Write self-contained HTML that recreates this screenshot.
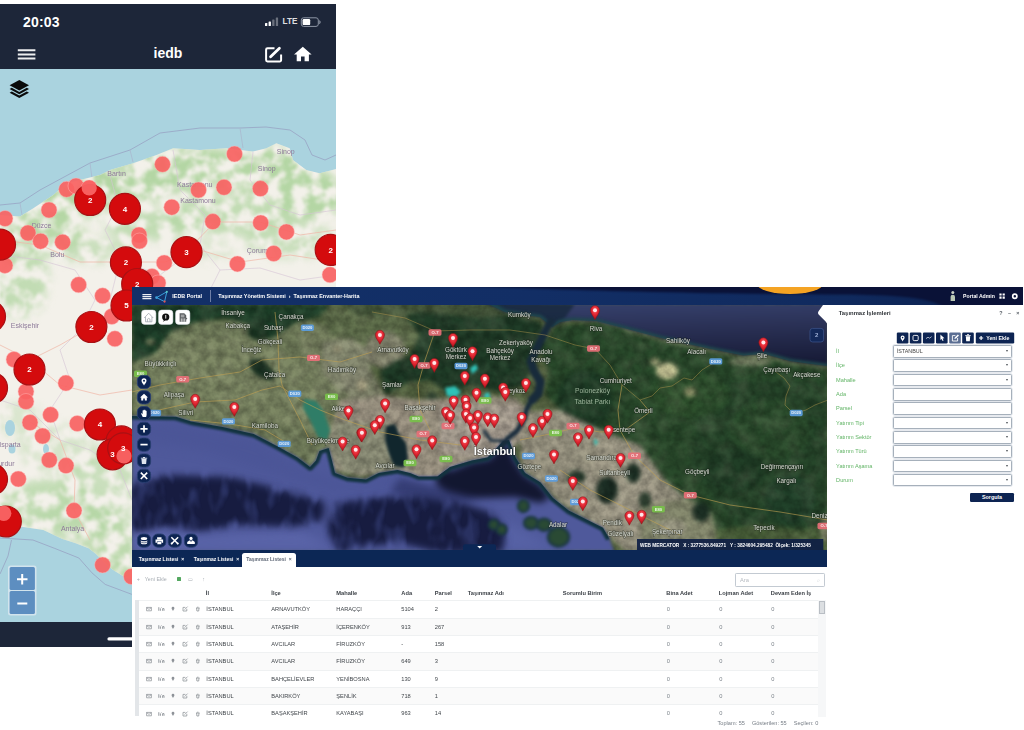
<!DOCTYPE html>
<html lang="tr"><head><meta charset="utf-8"><title>iedb</title>
<style>
html,body{margin:0;padding:0;background:#fff}
body{width:1024px;height:730px;position:relative;overflow:hidden;font-family:"Liberation Sans",sans-serif}
svg{display:block;overflow:hidden}
#mob,#desk{filter:blur(.55px)}

#mob{position:absolute;left:0;top:4px;width:335.5px;height:643px;overflow:hidden;background:#1d2639}
#mhead{position:absolute;left:0;top:0;width:336px;height:65px;background:#1d2639;color:#fff;font-weight:bold}
#mhead .time{position:absolute;left:23px;top:9.5px;font-size:14px;line-height:16px;letter-spacing:.2px}
#mhead .lte{position:absolute;left:282.5px;top:12.8px;font-size:8.2px;line-height:10px;opacity:.85}
#mhead .ttl{position:absolute;left:118px;width:100px;text-align:center;top:41px;font-size:14px;line-height:16px}
#msvg{position:absolute;left:0;top:0}
.ml{font-size:7px;text-anchor:middle;fill:#8d7a99;font-family:"Liberation Sans",sans-serif;filter:url(#b1)}
.cn{font-size:8px;font-weight:bold;fill:#fff;text-anchor:middle;font-family:"Liberation Sans",sans-serif}


#desk{position:absolute;left:132.3px;top:287px;width:890.7px;height:441px;background:#fff;overflow:hidden}
#dhead{position:absolute;left:0;top:0;z-index:2;width:100%;height:17.6px;background:linear-gradient(90deg,#133068 0%,#122e65 45%,#102a5e 80%,#0e2555 90%,#0b1a44 100%);color:#fff;font-weight:bold;font-size:5.4px;line-height:18.6px;overflow:hidden}
#dhead .sun{position:absolute;left:624.7px;top:-13px;width:66px;height:20px;border-radius:50%;background:#f4a323;filter:blur(.6px)}
#dhead svg{position:absolute;top:0}
#dhead .hbg{left:0}
#dhead .hb{left:7.7px}
#dhead .hr{left:812.7px}
#dhead .hr2{left:861.7px}
#dhead span{position:absolute;top:0;white-space:pre}
#dhead .h1{left:40px}
#dhead .sep{position:absolute;left:77.3px;top:2.8px;width:.8px;height:12px;background:#6f7fa6}
#dhead .h2{left:86px}
#dhead .h3{left:830.8px;font-size:5.15px}
#sat,#ovl{position:absolute;left:-.3px;top:17px}
#tabs{position:absolute;left:0;top:263.2px;width:694.8px;height:17px;background:#0c2755;color:#fff;font-size:5px;font-weight:bold}
#tabs .tb{position:absolute;top:3.2px;height:13.8px;line-height:12.6px;padding:0 0;white-space:nowrap}
#tabs .tb.act{background:#fff;color:#5d6675;border-radius:2.6px 2.6px 0 0;width:54.6px;text-align:center}
#tbl{position:absolute;left:0;top:280px;width:695px;height:161px;background:#fff;font-size:5.7px;color:#41464b}
#tbl .ttb{position:absolute;left:0;top:6.6px;height:10px;width:100px;color:#a7adb3;font-size:5.3px;line-height:10px}
#tbl .ttb span{position:absolute;top:0}
#tbl .ttb .gx{position:absolute;left:44.8px;top:3px;width:3.8px;height:4px;background:#54a860;border-radius:.6px}
#tbl .srch{position:absolute;left:603.2px;top:5.6px;width:87.4px;height:12px;border:.8px solid #c3cad2;border-radius:1.2px;color:#b5bac0;line-height:12px}
#tbl .srch span{position:absolute;left:3.6px}
#tbl .srch b{position:absolute;right:4px;font-weight:normal;color:#d3d7db}
#tbl .thr{position:absolute;left:0;top:20px;width:695px;height:13px;font-weight:bold;color:#3a3f45;line-height:13px}
#tbl .thr span,#tbl .tr span{position:absolute;white-space:nowrap}
#tbl .tr{position:absolute;left:5.6px;width:681px;height:16.6px;border-top:.75px solid #eff1f2;line-height:16.6px}
#tbl .tr span{margin-left:-5.6px}
#tbl .tr.alt{background:#fafafa}
#tbl .tr .ri{position:absolute;left:7.4px;top:4.2px;opacity:.8;filter:blur(.25px)}
#tbl .tr .z{color:#7d848b}
#tbl .lbar{position:absolute;left:3px;top:33.2px;width:3.3px;height:116px;background:#e3e6e9}
#tbl .sbar{position:absolute;left:686.2px;top:33px;width:7.4px;height:117px;background:#f6f7f8}
#tbl .sthumb{position:absolute;left:686.5px;top:33.8px;width:6.4px;height:13.6px;background:#dcdfe2;border:.6px solid #b9bec4;box-sizing:border-box}
#tbl .tft{position:absolute;right:9px;top:150.6px;color:#777e86;font-size:5.6px;line-height:10px;white-space:nowrap}
#tbl .tft span{margin-left:7px}
#pnl{position:absolute;left:695px;top:17.6px;width:196px;height:424px;background:#fff;font-size:5.4px}
#pnl .notch{position:absolute;left:-11.8px;top:0}
#pnl .pt{position:absolute;left:11.4px;top:4.8px;font-weight:bold;color:#2f3338;font-size:5.9px;line-height:9px}
#pnl .pc{position:absolute;left:169.5px;top:4.8px;color:#5a6068;font-weight:bold;line-height:9px}
#pnl .pc span{display:inline-block;width:8.4px;text-align:center}
#pnl .ptb{position:absolute;left:68.7px;top:27.4px}
#pnl .fl{position:absolute;left:8.8px;font-size:5.6px;color:#63b567;line-height:9px;white-space:nowrap}
#pnl .fi{position:absolute;left:65.4px;width:119.2px;height:12.6px;box-sizing:border-box;border:1px solid #a6b0bb;box-shadow:0 0 0 .7px #dfe4ea;border-radius:1.6px;background:#fff;color:#444;line-height:11px}
#pnl .fi span{position:absolute;left:3px}
#pnl .fi.sel:after{content:"";position:absolute;right:2.8px;top:4px;border:1.9px solid transparent;border-top:2.8px solid #4a4f56}
#pnl .sorg{position:absolute;left:142.6px;top:188.2px;width:44.2px;height:9.6px;background:#0d2452;color:#fff;font-weight:bold;text-align:center;line-height:9.6px;border-radius:1.2px}
.sl{font-size:6.3px;fill:#e6e8e0;opacity:.9;text-anchor:middle;font-family:"Liberation Sans",sans-serif;paint-order:stroke;stroke:#1c241c;stroke-width:1.1px;stroke-opacity:.65;filter:url(#sb05)}
.sl2{font-size:6.8px;fill:#a9bfa6;text-anchor:middle;font-family:"Liberation Sans",sans-serif;filter:url(#sb05);opacity:.9}
.sl3{font-size:11px;font-weight:bold;fill:#fff;text-anchor:middle;font-family:"Liberation Sans",sans-serif;paint-order:stroke;stroke:#222;stroke-width:1.2px;stroke-opacity:.6}
.sht{font-size:4.2px;fill:#fff;font-weight:bold;text-anchor:middle;font-family:"Liberation Sans",sans-serif;opacity:.85}
.bdg{font-size:6px;fill:#9fb0d6;font-weight:bold;text-anchor:middle;font-family:"Liberation Sans",sans-serif}
.stt{font-size:4.75px;fill:#fff;font-weight:bold;font-family:"Liberation Sans",sans-serif;white-space:pre}
.pbt{font-size:5.3px;fill:#fff;font-weight:bold;font-family:"Liberation Sans",sans-serif}

</style></head><body>
<div id="mob">
<div id="mhead"><span class="time">20:03</span><span class="lte">LTE</span><span class="ttl">iedb</span></div>
<svg id="msvg" width="336" height="643" viewBox="0 4 336 643">
<defs>
<filter id="b2" color-interpolation-filters="sRGB" x="-20%" y="-20%" width="140%" height="140%"><feGaussianBlur stdDeviation="2"/></filter>
<filter id="b4" color-interpolation-filters="sRGB" x="-20%" y="-20%" width="140%" height="140%"><feGaussianBlur stdDeviation="4"/></filter>
<filter id="b1" color-interpolation-filters="sRGB"><feGaussianBlur stdDeviation="0.6"/></filter>
<filter id="mott" color-interpolation-filters="sRGB" x="0" y="60" width="340" height="570" filterUnits="userSpaceOnUse"><feGaussianBlur in="SourceGraphic" stdDeviation="5" result="bl"/><feTurbulence type="fractalNoise" baseFrequency="0.075" numOctaves="3" seed="11" result="n"/><feColorMatrix in="n" type="matrix" values="0 0 0 0 0  0 0 0 0 0  0 0 0 0 0  3.2 0 0 0 -1.05" result="na"/><feComposite in="bl" in2="na" operator="in" result="m"/><feGaussianBlur in="m" stdDeviation="0.8"/></filter>
<clipPath id="mclip"><rect x="0" y="69" width="336" height="553"/></clipPath>
<clipPath id="landclip"><path d="M0,215 L20,216.6 L33.3,208.2 L53.3,195 L66.6,183.3 L100,175 L110,170 L133,163.3 L156.5,155 L173,148.3 L200,150 L226.4,148.3 L253,151.6 L266.4,148.3 L276.4,143.3 L289.7,148.3 L293,160 L306.4,170 L319.7,173.3 L336,169 L336,622 L170,622 L150,592 L131.4,579.4 L123,576 L115,571.2 L108,566 L102,560 L96,554 L88.7,548.2 L75,543 L62.4,539 L43.3,530 L20,526.6 L0,535 Z"/></clipPath>
</defs>
<g clip-path="url(#mclip)">
<rect x="0" y="69" width="336" height="553" fill="#aad3df"/>
<path d="M0,205 L20,203 L40,190 L90,163 L130,150 L160,133 L200,128 L240,128 L266,127 L290,130 L305,140 L312,155 L325,160 L336,155" fill="none" stroke="#9aa9c6" stroke-width="1" opacity=".9"/>
<path d="M20,203 L22,215 M90,163 L92,178 M130,150 L133,162 M240,128 L243,148" fill="none" stroke="#a9b9cf" stroke-width=".8"/>
<path d="M0,538 L32.9,540 L54.2,548.2 L78.9,558 L92,572.9 L105.2,584.4 L131.4,594.2 L150,600 M11.5,540 L8,556 L0,574" fill="none" stroke="#9aa9c6" stroke-width="1" opacity=".9"/>
<path d="M0,215 L20,216.6 L33.3,208.2 L53.3,195 L66.6,183.3 L100,175 L110,170 L133,163.3 L156.5,155 L173,148.3 L200,150 L226.4,148.3 L253,151.6 L266.4,148.3 L276.4,143.3 L289.7,148.3 L293,160 L306.4,170 L319.7,173.3 L336,169 L336,622 L170,622 L150,592 L131.4,579.4 L123,576 L115,571.2 L108,566 L102,560 L96,554 L88.7,548.2 L75,543 L62.4,539 L43.3,530 L20,526.6 L0,535 Z" fill="#f3f1ea"/>
<g clip-path="url(#landclip)">
<g filter="url(#mott)">
<ellipse cx="60" cy="205" rx="51.75" ry="18.2" fill="#b4d6a4" opacity="1"/>
<ellipse cx="120" cy="185" rx="57.5" ry="20.8" fill="#b4d6a4" opacity="1"/>
<ellipse cx="190" cy="170" rx="69" ry="23.4" fill="#b4d6a4" opacity="1"/>
<ellipse cx="260" cy="170" rx="57.5" ry="23.4" fill="#b4d6a4" opacity="1"/>
<ellipse cx="310" cy="195" rx="34.5" ry="26" fill="#b4d6a4" opacity="1"/>
<ellipse cx="230" cy="215" rx="69" ry="20.8" fill="#b4d6a4" opacity="0.78"/>
<ellipse cx="150" cy="225" rx="46" ry="15.6" fill="#b4d6a4" opacity="0.78"/>
<ellipse cx="40" cy="235" rx="46" ry="18.2" fill="#b4d6a4" opacity="0.91"/>
<ellipse cx="90" cy="250" rx="46" ry="13" fill="#b4d6a4" opacity="0.65"/>
<ellipse cx="20" cy="280" rx="28.75" ry="39" fill="#b4d6a4" opacity="0.78"/>
<ellipse cx="290" cy="240" rx="46" ry="18.2" fill="#b4d6a4" opacity="0.65"/>
<ellipse cx="200" cy="250" rx="34.5" ry="10.4" fill="#b4d6a4" opacity="0.455"/>
<ellipse cx="60" cy="450" rx="40.25" ry="26" fill="#b4d6a4" opacity="0.455"/>
<ellipse cx="100" cy="485" rx="40.25" ry="32.5" fill="#b4d6a4" opacity="0.65"/>
<ellipse cx="50" cy="505" rx="51.75" ry="26" fill="#b4d6a4" opacity="0.78"/>
<ellipse cx="110" cy="545" rx="32.2" ry="36.4" fill="#b4d6a4" opacity="0.845"/>
<ellipse cx="120" cy="590" rx="28.75" ry="32.5" fill="#b4d6a4" opacity="0.65"/>
<ellipse cx="20" cy="420" rx="23" ry="19.5" fill="#b4d6a4" opacity="0.39"/>
<ellipse cx="75" cy="522" rx="43.7" ry="20.8" fill="#b4d6a4" opacity="0.65"/>
</g>
<g fill="none" stroke="#d6c4d6" stroke-width=".8" opacity=".75"><path d="M110,175 L118,205 L105,230 L120,260 L110,300"/><path d="M173,150 L180,190 L205,215 L200,245 L220,270 L210,290"/><path d="M253,152 L250,180 L270,205 L300,215 L336,210"/><path d="M0,255 L40,260 L75,270 L95,300 L80,330 L60,350 L70,380 L50,410 L60,440"/><path d="M120,260 L160,275 L200,245"/><path d="M220,270 L260,268 L300,280 L336,275"/><path d="M0,400 L30,410 L60,440 L90,450 L120,470 L132,500"/></g>
<g fill="none" stroke="#f0b8a8" stroke-width=".8" opacity=".9"><path d="M0,240 L40,245 L80,262 L125,262 L165,262 L200,250 L240,262 L290,255 L336,262"/><path d="M0,345 L30,360 L60,385 L100,395 L132,390"/><path d="M125,262 L120,300 L95,325 L60,345 L30,360"/><path d="M30,422 L60,440 L75,480 L74,510 L90,540"/><path d="M186,252 L215,222 L260,222 L300,235 L336,230"/></g>
<ellipse cx="10" cy="428" rx="5" ry="8" fill="#aad3df"/><ellipse cx="12" cy="449" rx="3.5" ry="4.5" fill="#aad3df"/><ellipse cx="46" cy="449" rx="3" ry="5" fill="#aad3df"/>
</g>
<text x="116.6" y="175.7" class="ml">Bartın</text>
<text x="194.8" y="187.2" class="ml">Kastamonu</text>
<text x="198" y="203" class="ml">Kastamonu</text>
<text x="285.8" y="154.4" class="ml">Sinop</text>
<text x="266.7" y="170.8" class="ml">Sinop</text>
<text x="41.6" y="228.4" class="ml">Düzce</text>
<text x="57.3" y="257.4" class="ml">Bolu</text>
<text x="257.3" y="252.9" class="ml">Çorum</text>
<text x="25" y="328.4" class="ml">Eskişehir</text>
<text x="72.6" y="530.7" class="ml">Antalya</text>
<text x="4" y="465.9" class="ml">Burdur</text>
<text x="10" y="447.4" class="ml">Isparta</text>
<circle cx="234.5" cy="154" r="8" fill="#f96262" opacity=".92" stroke="#fbb" stroke-width=".8" stroke-opacity=".6"/>
<circle cx="162.5" cy="164.3" r="8" fill="#f96262" opacity=".92" stroke="#fbb" stroke-width=".8" stroke-opacity=".6"/>
<circle cx="198.5" cy="190" r="8" fill="#f96262" opacity=".92" stroke="#fbb" stroke-width=".8" stroke-opacity=".6"/>
<circle cx="224" cy="187.3" r="8" fill="#f96262" opacity=".92" stroke="#fbb" stroke-width=".8" stroke-opacity=".6"/>
<circle cx="260.4" cy="188.6" r="8" fill="#f96262" opacity=".92" stroke="#fbb" stroke-width=".8" stroke-opacity=".6"/>
<circle cx="171.8" cy="207.2" r="8" fill="#f96262" opacity=".92" stroke="#fbb" stroke-width=".8" stroke-opacity=".6"/>
<circle cx="212.8" cy="221.6" r="8" fill="#f96262" opacity=".92" stroke="#fbb" stroke-width=".8" stroke-opacity=".6"/>
<circle cx="260.7" cy="222.9" r="8" fill="#f96262" opacity=".92" stroke="#fbb" stroke-width=".8" stroke-opacity=".6"/>
<circle cx="286.4" cy="231.9" r="8" fill="#f96262" opacity=".92" stroke="#fbb" stroke-width=".8" stroke-opacity=".6"/>
<circle cx="273.7" cy="253.5" r="8" fill="#f96262" opacity=".92" stroke="#fbb" stroke-width=".8" stroke-opacity=".6"/>
<circle cx="237.4" cy="263.9" r="8" fill="#f96262" opacity=".92" stroke="#fbb" stroke-width=".8" stroke-opacity=".6"/>
<circle cx="330" cy="274.8" r="8" fill="#f96262" opacity=".92" stroke="#fbb" stroke-width=".8" stroke-opacity=".6"/>
<circle cx="164.2" cy="262.9" r="8" fill="#f96262" opacity=".92" stroke="#fbb" stroke-width=".8" stroke-opacity=".6"/>
<circle cx="139" cy="235" r="8" fill="#f96262" opacity=".92" stroke="#fbb" stroke-width=".8" stroke-opacity=".6"/>
<circle cx="139.5" cy="241" r="8" fill="#f96262" opacity=".92" stroke="#fbb" stroke-width=".8" stroke-opacity=".6"/>
<circle cx="66.6" cy="189.3" r="8" fill="#f96262" opacity=".92" stroke="#fbb" stroke-width=".8" stroke-opacity=".6"/>
<circle cx="76" cy="186" r="8" fill="#f96262" opacity=".92" stroke="#fbb" stroke-width=".8" stroke-opacity=".6"/>
<circle cx="89.2" cy="188" r="8" fill="#f96262" opacity=".92" stroke="#fbb" stroke-width=".8" stroke-opacity=".6"/>
<circle cx="49" cy="210" r="8" fill="#f96262" opacity=".92" stroke="#fbb" stroke-width=".8" stroke-opacity=".6"/>
<circle cx="5" cy="218.5" r="8" fill="#f96262" opacity=".92" stroke="#fbb" stroke-width=".8" stroke-opacity=".6"/>
<circle cx="28" cy="233" r="8" fill="#f96262" opacity=".92" stroke="#fbb" stroke-width=".8" stroke-opacity=".6"/>
<circle cx="40.6" cy="241.2" r="8" fill="#f96262" opacity=".92" stroke="#fbb" stroke-width=".8" stroke-opacity=".6"/>
<circle cx="62.6" cy="242.2" r="8" fill="#f96262" opacity=".92" stroke="#fbb" stroke-width=".8" stroke-opacity=".6"/>
<circle cx="5" cy="265.4" r="8" fill="#f96262" opacity=".92" stroke="#fbb" stroke-width=".8" stroke-opacity=".6"/>
<circle cx="78.6" cy="284.8" r="8" fill="#f96262" opacity=".92" stroke="#fbb" stroke-width=".8" stroke-opacity=".6"/>
<circle cx="102.6" cy="295.8" r="8" fill="#f96262" opacity=".92" stroke="#fbb" stroke-width=".8" stroke-opacity=".6"/>
<circle cx="111.8" cy="316.5" r="8" fill="#f96262" opacity=".92" stroke="#fbb" stroke-width=".8" stroke-opacity=".6"/>
<circle cx="114.9" cy="338.8" r="8" fill="#f96262" opacity=".92" stroke="#fbb" stroke-width=".8" stroke-opacity=".6"/>
<circle cx="152" cy="276.5" r="8" fill="#f96262" opacity=".92" stroke="#fbb" stroke-width=".8" stroke-opacity=".6"/>
<circle cx="158" cy="283" r="8" fill="#f96262" opacity=".92" stroke="#fbb" stroke-width=".8" stroke-opacity=".6"/>
<circle cx="14" cy="359.5" r="8" fill="#f96262" opacity=".92" stroke="#fbb" stroke-width=".8" stroke-opacity=".6"/>
<circle cx="65.9" cy="383.1" r="8" fill="#f96262" opacity=".92" stroke="#fbb" stroke-width=".8" stroke-opacity=".6"/>
<circle cx="26" cy="391.5" r="8" fill="#f96262" opacity=".92" stroke="#fbb" stroke-width=".8" stroke-opacity=".6"/>
<circle cx="26" cy="401.5" r="8" fill="#f96262" opacity=".92" stroke="#fbb" stroke-width=".8" stroke-opacity=".6"/>
<circle cx="50.6" cy="414.8" r="8" fill="#f96262" opacity=".92" stroke="#fbb" stroke-width=".8" stroke-opacity=".6"/>
<circle cx="30" cy="422.5" r="8" fill="#f96262" opacity=".92" stroke="#fbb" stroke-width=".8" stroke-opacity=".6"/>
<circle cx="77.3" cy="423.5" r="8" fill="#f96262" opacity=".92" stroke="#fbb" stroke-width=".8" stroke-opacity=".6"/>
<circle cx="42.6" cy="436" r="8" fill="#f96262" opacity=".92" stroke="#fbb" stroke-width=".8" stroke-opacity=".6"/>
<circle cx="49.3" cy="460" r="8" fill="#f96262" opacity=".92" stroke="#fbb" stroke-width=".8" stroke-opacity=".6"/>
<circle cx="66" cy="465.6" r="8" fill="#f96262" opacity=".92" stroke="#fbb" stroke-width=".8" stroke-opacity=".6"/>
<circle cx="18.3" cy="479" r="8" fill="#f96262" opacity=".92" stroke="#fbb" stroke-width=".8" stroke-opacity=".6"/>
<circle cx="74" cy="510.6" r="8" fill="#f96262" opacity=".92" stroke="#fbb" stroke-width=".8" stroke-opacity=".6"/>
<circle cx="102.6" cy="565" r="8" fill="#f96262" opacity=".92" stroke="#fbb" stroke-width=".8" stroke-opacity=".6"/>
<circle cx="131.5" cy="576.5" r="8" fill="#f96262" opacity=".92" stroke="#fbb" stroke-width=".8" stroke-opacity=".6"/>
<circle cx="124" cy="456" r="8" fill="#f96262" opacity=".92" stroke="#fbb" stroke-width=".8" stroke-opacity=".6"/>
<circle cx="90.2" cy="200" r="15.5" fill="#d40b0d" stroke="#a91114" stroke-width="1.2"/>
<circle cx="124.9" cy="208.8" r="15.5" fill="#d40b0d" stroke="#a91114" stroke-width="1.2"/>
<circle cx="186.5" cy="252.2" r="15.5" fill="#d40b0d" stroke="#a91114" stroke-width="1.2"/>
<circle cx="125.9" cy="262.4" r="15.5" fill="#d40b0d" stroke="#a91114" stroke-width="1.2"/>
<circle cx="137.2" cy="284" r="15.5" fill="#d40b0d" stroke="#a91114" stroke-width="1.2"/>
<circle cx="126.5" cy="305.5" r="15.5" fill="#d40b0d" stroke="#a91114" stroke-width="1.2"/>
<circle cx="91.4" cy="327" r="15.5" fill="#d40b0d" stroke="#a91114" stroke-width="1.2"/>
<circle cx="0" cy="244.6" r="15.5" fill="#d40b0d" stroke="#a91114" stroke-width="1.2"/>
<circle cx="330.7" cy="249.9" r="15.5" fill="#d40b0d" stroke="#a91114" stroke-width="1.2"/>
<circle cx="-10" cy="316.5" r="15.5" fill="#d40b0d" stroke="#a91114" stroke-width="1.2"/>
<circle cx="29.5" cy="369.5" r="15.5" fill="#d40b0d" stroke="#a91114" stroke-width="1.2"/>
<circle cx="-8" cy="388" r="15.5" fill="#d40b0d" stroke="#a91114" stroke-width="1.2"/>
<circle cx="99.9" cy="424.5" r="15.5" fill="#d40b0d" stroke="#a91114" stroke-width="1.2"/>
<circle cx="121.5" cy="441.4" r="15.5" fill="#d40b0d" stroke="#a91114" stroke-width="1.2"/>
<circle cx="112.6" cy="454.3" r="15.5" fill="#d40b0d" stroke="#a91114" stroke-width="1.2"/>
<circle cx="123.2" cy="448.3" r="15.5" fill="#d40b0d" stroke="#a91114" stroke-width="1.2"/>
<circle cx="-8" cy="479.3" r="15.5" fill="#d40b0d" stroke="#a91114" stroke-width="1.2"/>
<circle cx="5.8" cy="521.5" r="15.5" fill="#d40b0d" stroke="#a91114" stroke-width="1.2"/>
<circle cx="89.2" cy="188" r="7.6" fill="#f96464" opacity=".95"/>
<circle cx="124" cy="456" r="7.6" fill="#f96464" opacity=".95"/>
<circle cx="3.8" cy="513.3" r="7.6" fill="#f96464" opacity=".95"/>
<text x="90.2" y="202.8" class="cn">2</text>
<text x="124.9" y="211.6" class="cn">4</text>
<text x="186.5" y="255" class="cn">3</text>
<text x="125.9" y="265.2" class="cn">2</text>
<text x="137.2" y="286.8" class="cn">2</text>
<text x="126.5" y="308.3" class="cn">5</text>
<text x="91.4" y="329.8" class="cn">2</text>
<text x="330.7" y="252.7" class="cn">2</text>
<text x="29.5" y="372.3" class="cn">2</text>
<text x="99.9" y="427.3" class="cn">4</text>
<text x="112.6" y="457.1" class="cn">3</text>
<text x="123.2" y="451.1" class="cn">3</text>
<g fill="#0b0b0b"><path d="M19.3,80 L29,85.3 L19.3,90.6 L9.6,85.3 Z"/><path d="M9.6,89 L11.8,87.8 L19.3,91.9 L26.8,87.8 L29,89 L19.3,94.3 Z"/><path d="M9.6,92.7 L11.8,91.5 L19.3,95.6 L26.8,91.5 L29,92.7 L19.3,98 Z"/></g>
<rect x="8" y="565.5" width="28.5" height="50" rx="2.5" fill="#dfe9f2" opacity=".75"/><rect x="9.6" y="567" width="25.3" height="23" rx="1.5" fill="#5d8ec0"/><rect x="9.6" y="591" width="25.3" height="23" rx="1.5" fill="#5d8ec0"/><path d="M17,579.2 h10.5 M22.2,574 v10.5 M17.3,603.5 h10" stroke="#fff" stroke-width="2" fill="none"/>
</g>
<rect x="0" y="622" width="336" height="25" fill="#1d2639"/>
<rect x="107.4" y="637.3" width="122" height="3.3" rx="1.65" fill="#fff"/>
<g fill="none" stroke="#fff"><path d="M17.8,50.2 h17.6 M17.8,54.4 h17.6 M17.8,58.5 h17.6" stroke-width="2" opacity=".92"/></g>
<g fill="none" stroke="#fff" stroke-linejoin="round"><path d="M274.5,48.3 h-7 a1.4,1.4 0 0 0 -1.4,1.4 v10.4 a1.4,1.4 0 0 0 1.4,1.4 h12.2 a1.4,1.4 0 0 0 1.4,-1.4 v-5.6" stroke-width="2"/><path d="M270.6,56.8 L279.4,48.2" stroke-width="2.8" stroke-linecap="round"/></g>
<path d="M302.8,46.8 L294,54.6 h2.7 v6.6 h4.3 v-4.6 h3.6 v4.6 h4.3 v-6.6 h2.7 Z" fill="#fff"/>
<g fill="#fff"><rect x="265" y="23" width="2.3" height="3" rx=".5"/><rect x="268.6" y="21.5" width="2.3" height="4.5" rx=".5"/><rect x="272.2" y="19.5" width="2.3" height="6.5" rx=".5" opacity=".35"/><rect x="275.8" y="17.5" width="2.3" height="8.5" rx=".5" opacity=".35"/></g>
<rect x="301.3" y="17.8" width="17" height="8.6" rx="2.3" fill="none" stroke="#8e96a5" stroke-width="1"/><rect x="302.6" y="19.1" width="7.6" height="6" rx="1.2" fill="#fff"/><path d="M319.3,20.6 q1.6,1.5 0,3" stroke="#8e96a5" stroke-width="1.2" fill="none"/>
</svg>
</div>
<div id="desk">
<div id="dhead"><svg class="hbg" width="891" height="18" viewBox="0 0 891 18"><defs><filter id="hbl" color-interpolation-filters="sRGB" x="-5%" y="-50%" width="110%" height="200%"><feGaussianBlur stdDeviation="1.2"/></filter></defs><path d="M300,-2 L895,-2 L895,20 L812,20 C795,9.5 760,7.6 700,7.4 L620,6.8 C540,6 440,3 300,-2 Z" fill="#0a1237" filter="url(#hbl)"/></svg><div class="sun"></div><svg class="hb" width="34" height="18" viewBox="140 287 34 18"><path d="M142.4,294.6 h9 M142.4,296.6 h9 M142.4,298.6 h9" stroke="#fff" stroke-width="1.25" opacity=".92"/><path d="M156.5,297.6 L166.8,291.8 L164.6,301.6 Z" fill="none" stroke="#3aa0dc" stroke-width="1"/><circle cx="156.5" cy="297.6" r="1.3" fill="#3aa0dc"/><circle cx="166.8" cy="291.8" r="1.1" fill="#57c7c2"/><circle cx="164.6" cy="301.6" r="1.1" fill="#e8554e"/></svg><span class="h1">IEDB Portal</span><i class="sep"></i><span class="h2">Taşınmaz Yönetim Sistemi  ›  Taşınmaz Envanter-Harita</span><span class="h3">Portal Admin</span><svg class="hr" width="50" height="18" viewBox="945 287 50 18"><circle cx="952.8" cy="292.6" r="1.5" fill="#c9cfc4"/><path d="M950.6,301 v-4.2 q0,-2 2.2,-2 q2.2,0 2.2,2 v4.2 Z" fill="#b9c7b4"/></svg><svg class="hr2" width="30" height="18" viewBox="994 287 30 18"><path d="M999.4,293.4 h2.2 v2.2 h-2.2 Z M1002.6,293.4 h2.2 v2.2 h-2.2 Z M999.4,296.6 h2.2 v2.2 h-2.2 Z M1002.6,296.6 h2.2 v2.2 h-2.2 Z" fill="#fff"/><circle cx="1014.8" cy="296.2" r="2.1" fill="none" stroke="#fff" stroke-width="1.7"/></svg></div>
<svg id="sat" width="696" height="246.2" viewBox="132 304 696 246.2">
<defs>
<filter id="sb2" color-interpolation-filters="sRGB" x="-10%" y="-10%" width="120%" height="120%"><feGaussianBlur stdDeviation="2"/></filter>
<filter id="sb3" color-interpolation-filters="sRGB" x="-10%" y="-10%" width="120%" height="120%"><feGaussianBlur stdDeviation="3"/></filter>
<filter id="sb1" color-interpolation-filters="sRGB" x="-10%" y="-10%" width="120%" height="120%"><feGaussianBlur stdDeviation="1"/></filter>
<filter id="sb15" color-interpolation-filters="sRGB" x="-10%" y="-10%" width="120%" height="120%"><feGaussianBlur stdDeviation="1.5"/></filter>
<filter id="sb6" color-interpolation-filters="sRGB" x="-20%" y="-20%" width="140%" height="140%"><feGaussianBlur stdDeviation="6"/></filter>
<filter id="sb03" color-interpolation-filters="sRGB"><feGaussianBlur stdDeviation="0.35"/></filter>
<filter id="sb05" color-interpolation-filters="sRGB"><feGaussianBlur stdDeviation="0.55"/></filter>
<filter id="noise" color-interpolation-filters="sRGB" x="0" y="0" width="100%" height="100%"><feTurbulence type="fractalNoise" baseFrequency="0.12" numOctaves="3" seed="7"/><feColorMatrix type="matrix" values="0 0 0 0 0  0 0 0 0 0  0 0 0 0 0  0.9 0 0 0 -0.25"/></filter>
<filter id="noise2" color-interpolation-filters="sRGB" x="0" y="0" width="100%" height="100%"><feTurbulence type="fractalNoise" baseFrequency="0.06" numOctaves="2" seed="3"/><feColorMatrix type="matrix" values="0 0 0 0 1  0 0 0 0 1  0 0 0 0 0.85  1.1 0 0 0 -0.45"/></filter>
<linearGradient id="bsg" x1="0" y1="0" x2="0.12" y2="1"><stop offset="0" stop-color="#36416d"/><stop offset=".4" stop-color="#2b3257"/><stop offset="1" stop-color="#181c38"/></linearGradient>
<clipPath id="marc"><path d="M132,416 L160,416.5 L176,416.8 L191,421.5 L222.5,427 L253.7,434 L278.7,447 L297.5,457.5 L310,467 L316,460.6 L319.4,451 L328.7,448 L332,460.6 L335,473 L347.5,477.8 L366,479.4 L378.7,473 L397.5,470 L410,473 L418.7,476.5 L437.5,476.5 L450,467 L472,460.6 L487.5,457.5 L496,449 L503,441 L509,440 L515.6,457.5 L525,473 L540.6,482.5 L553,498 L568.7,510.6 L587.5,520 L603,527.8 L609.4,538.7 L614,551 L132,551 Z"/></clipPath>
<clipPath id="bsc"><path d="M488,304 L505,312 L525,315 L540,317 L552,327 L560,322 L572.5,320 L596.5,321 L623.8,328 L661.4,338 L709,348.6 L743.4,355.4 L764,353.7 L790,361 L811.8,364 L828,366 L828,304 Z"/></clipPath>
<filter id="sb4" color-interpolation-filters="sRGB" x="-20%" y="-20%" width="140%" height="140%"><feGaussianBlur stdDeviation="3.5"/></filter>
<filter id="trn" color-interpolation-filters="sRGB" filterUnits="userSpaceOnUse" x="132" y="460" width="400" height="95"><feGaussianBlur in="SourceGraphic" stdDeviation="4" result="bl"/><feTurbulence type="fractalNoise" baseFrequency="0.075 0.04" numOctaves="2" seed="4" result="n"/><feColorMatrix in="n" type="matrix" values="0 0 0 0 0.09  0 0 0 0 0.11  0 0 0 0 0.25  3.4 0 0 0 -0.85" result="na"/><feComposite in="na" in2="bl" operator="in"/></filter>
<clipPath id="landc"><path d="M132,304 H828 V551 H132 Z"/></clipPath>
<radialGradient id="pg" cx=".5" cy=".32" r=".65"><stop offset="0" stop-color="#ff5a63"/><stop offset=".55" stop-color="#df2430"/><stop offset="1" stop-color="#a8131b"/></radialGradient>
<g id="pin"><path d="M0,7 C-1.3,3.8 -4.6,0.7 -4.6,-2.4 A4.6,4.6 0 0 1 4.6,-2.4 C4.6,0.7 1.3,3.8 0,7 Z" fill="url(#pg)" stroke="#8e1418" stroke-width=".5"/><circle cx="0" cy="-2.4" r="2" fill="#ffeef0" opacity=".96"/></g>
</defs>
<rect x="132" y="304" width="696" height="247" fill="#53633f"/>
<g filter="url(#sb2)">
<path d="M132,330 L200,322 L300,318 L350,330 L372,360 L360,420 L335,470 L300,462 L250,434 L190,420 L132,415 Z" fill="#737f5c"/>
<path d="M150,345 L190,335 L250,340 L330,372 L320,430 L200,415 L150,405 Z" fill="#7f8965" opacity=".85"/>
<path d="M300,330 L345,335 L370,365 L350,400 L320,395 L305,360 Z" fill="#7b8463" opacity=".8"/>
<path d="M132,304 L330,304 L322,316 L296,322 L272,338 L256,340 L248,324 L225,318 L195,322 L170,332 L156,352 L132,362 Z" fill="#1d4029"/>
<path d="M132,304 L195,304 L192,322 L160,334 L150,356 L132,360 Z" fill="#193c26"/>
<ellipse cx="258" cy="331" rx="11" ry="9" fill="#193421"/>
<path d="M250,359 L263,360 L276,374 L271,381 L257,376 L250,368 Z" fill="#172f20"/>
<path d="M320,312 L420,306 L440,330 L400,350 L370,345 L330,335 Z" fill="#60704c"/>
<path d="M322,342 L352,338 L372,352 L368,384 L340,392 L322,372 Z" fill="#8f907a" opacity=".75"/>
<ellipse cx="385" cy="350" rx="20" ry="18" fill="#8e8c78" opacity=".85"/>
<path d="M405,315 L440,308 L500,310 L540,322 L548,340 L535,360 L525,385 L500,392 L470,385 L450,395 L430,380 L410,382 L385,395 L380,370 L410,355 L420,335 Z" fill="#1f3c27"/>
<ellipse cx="400" cy="372" rx="14" ry="12" fill="#1e3a26"/>
<ellipse cx="432" cy="404" rx="7" ry="12" fill="#243e2a"/>
<path d="M340,304 L500,304 L520,314 L480,318 L420,312 L360,316 Z" fill="#45583b"/>
<path d="M556,326 L600,322 L660,338 L710,350 L760,357 L828,366 L828,551 L700,551 L690,520 L655,490 L640,455 L600,440 L565,415 L545,395 L548,370 L540,350 Z" fill="#294a2b"/>
<path d="M700,380 L828,380 L828,530 L740,530 L690,470 Z" fill="#26462a"/>
<ellipse cx="585" cy="400" rx="28" ry="30" fill="#1e3d26"/>
<ellipse cx="790" cy="500" rx="25" ry="25" fill="#21422a"/>
<ellipse cx="690" cy="395" rx="40" ry="22" fill="#2f522e" opacity=".8"/>
<ellipse cx="770" cy="430" rx="40" ry="30" fill="#2c4d2d" opacity=".8"/><ellipse cx="735" cy="470" rx="30" ry="22" fill="#1f3c25" opacity=".8"/>
<path d="M340,400 L380,395 L420,400 L450,398 L480,396 L515,398 L530,410 L522,440 L505,455 L470,462 L440,478 L420,482 L395,470 L360,476 L334,470 L328,440 Z" fill="#a09786"/>
<path d="M440,405 L520,405 L515,445 L470,458 L440,450 Z" fill="#ada396"/>
<path d="M335,420 L395,425 L400,468 L345,474 L330,450 Z" fill="#8f917a"/>
<path d="M340,372 L370,368 L385,395 L350,402 Z" fill="#8a8b74" opacity=".8"/>
<path d="M528,412 L560,410 L600,430 L640,445 L665,480 L700,510 L720,540 L700,551 L625,551 L600,528 L560,502 L540,482 L522,468 L520,440 Z" fill="#9d9885"/>
<path d="M600,440 L640,450 L660,500 L640,540 L600,520 L585,480 Z" fill="#a59f8c"/>
<path d="M640,505 L690,498 L712,512 L722,551 L640,551 Z" fill="#858a6c" opacity=".85"/>
<path d="M715,530 L760,524 L800,530 L828,524 L828,551 L715,551 Z" fill="#55683f" opacity=".7"/>
<ellipse cx="826" cy="528" rx="6" ry="14" fill="#8d8f74" opacity=".8"/>
<ellipse cx="607" cy="490" rx="11" ry="13.5" fill="#1c2f25"/>
<ellipse cx="633" cy="473" rx="7.5" ry="10" fill="#1d3125"/>
<ellipse cx="701" cy="512" rx="9" ry="10" fill="#1e3226"/>
<ellipse cx="576" cy="477" rx="9.5" ry="6.5" fill="#23382a"/>
<ellipse cx="645" cy="500" rx="6" ry="8" fill="#243829"/>
<ellipse cx="667" cy="371" rx="11" ry="8.5" fill="#d0cb9c" opacity=".95"/><ellipse cx="690" cy="392" rx="6" ry="5" fill="#b3ae82" opacity=".75"/><ellipse cx="655" cy="362" rx="5" ry="4" fill="#bcb88c" opacity=".8"/>
<ellipse cx="362" cy="385" rx="5" ry="6" fill="#b5ad8c" opacity=".8"/><ellipse cx="150" cy="342" rx="5" ry="3" fill="#a9a77f" opacity=".7"/><ellipse cx="337" cy="349" rx="4" ry="3" fill="#b3ab88" opacity=".7"/>
<ellipse cx="672" cy="528" rx="14" ry="9" fill="#b4ae9a" opacity=".7"/>
<path d="M623.8,330 L661.4,340 L709,350.6 L743.4,357.4 L764,355.7 L790,363 L811.8,366 L828,368" fill="none" stroke="#8d9272" stroke-width="2.2" opacity=".8"/>
<ellipse cx="750" cy="362" rx="22" ry="4" fill="#8f9477" opacity=".8"/>
</g>
<rect x="132" y="304" width="696" height="247" filter="url(#noise)" opacity=".55"/>
<rect x="132" y="304" width="696" height="247" filter="url(#noise2)" opacity=".22"/>
<g filter="url(#sb15)">
<path d="M488,304 L505,312 L525,315 L540,317 L552,327 L560,322 L572.5,320 L596.5,321 L623.8,328 L661.4,338 L709,348.6 L743.4,355.4 L764,353.7 L790,361 L811.8,364 L828,366 L828,304 Z" fill="url(#bsg)"/>
<path d="M484,302 L505,312 L525,315 L540,317 L552,327 L562,322 L575,304 Z" fill="#1a2a40" opacity=".9"/>
<path d="M132,416 L160,416.5 L176,416.8 L191,421.5 L222.5,427 L253.7,434 L278.7,447 L297.5,457.5 L310,467 L316,460.6 L319.4,451 L328.7,448 L332,460.6 L335,473 L347.5,477.8 L366,479.4 L378.7,473 L397.5,470 L410,473 L418.7,476.5 L437.5,476.5 L450,467 L472,460.6 L487.5,457.5 L496,449 L503,441 L509,440 L515.6,457.5 L525,473 L540.6,482.5 L553,498 L568.7,510.6 L587.5,520 L603,527.8 L609.4,538.7 L614,551 L132,551 Z" fill="#4f599b"/>
</g>
<g clip-path="url(#marc)">
<g filter="url(#sb6)">
<path d="M132,416 L200,426 L260,440 L300,466 L345,482 L400,474 L400,490 L330,492 L260,470 L200,450 L132,440 Z" fill="#4a5495" opacity=".7"/>
<path d="M132,520 L200,535 L300,530 L340,551 L132,551 Z" fill="#5c67ab" opacity=".8"/>
<path d="M505,520 L560,551 L500,551 Z" fill="#5c67ab" opacity=".6"/>
</g>
<g filter="url(#sb4)">
<path d="M436,470 L452,470 L472,462 L490,459 L500,447 L508,444 L514,460 L524,475 L540,485 L550,498 L540,503 L515,497 L480,498 L450,494 L436,484 Z" fill="#11152c" opacity=".97"/>
<path d="M132,484 L170,478 L230,480 L280,492 L322,504 L320,518 L290,524 L240,522 L200,528 L160,524 L132,530 Z" fill="#252c5b" opacity=".9"/>
<path d="M335,506 L370,500 L420,500 L460,506 L490,515 L503,530 L500,551 L440,551 L400,540 L360,544 L340,551 L330,530 Z" fill="#252c5b" opacity=".9"/>
<path d="M400,478 L440,488 L480,500 L460,504 L420,500 L390,492 Z" fill="#2f376b" opacity=".8"/>
</g>
<g filter="url(#trn)"><path d="M132,482 L170,476 L230,478 L280,490 L324,502 L322,520 L290,526 L240,524 L200,530 L160,526 L132,532 Z"/><path d="M333,506 L370,498 L420,498 L460,504 L490,513 L505,530 L502,551 L440,551 L400,542 L360,546 L340,551 L328,530 Z"/></g>
</g>
<g clip-path="url(#marc)"><path d="M126,416 L160,416.5 L176,416.8 L191,421.5 L222.5,427 L253.7,434 L278.7,447 L297.5,457.5 L310,467 L316,460.6 L319.4,451 L328.7,448 L332,460.6 L335,473 L347.5,477.8 L366,479.4 L378.7,473 L397.5,470 L410,473 L418.7,476.5 L437.5,476.5 L450,467 L472,460.6 L487.5,457.5 L496,449 L503,441 L509,440 L515.6,457.5 L525,473 L540.6,482.5 L553,498 L568.7,510.6 L587.5,520 L603,527.8 L609.4,538.7" fill="none" stroke="#12333f" stroke-width="7" stroke-linejoin="round" opacity="1" filter="url(#sb1)"/></g>
<g clip-path="url(#bsc)"><path d="M484,300 L505,312 L525,315 L540,317 L552,327 L560,322 L572.5,320 L596.5,321 L623.8,328 L661.4,338 L709,348.6 L743.4,355.4 L764,353.7 L790,361 L811.8,364 L834,367" fill="none" stroke="#1d474f" stroke-width="5" stroke-linejoin="round" opacity=".85" filter="url(#sb15)"/></g>
<g filter="url(#sb15)">
<path d="M550,322 L547.5,326 L540,342 L530,360 L533.4,370.3 L540.5,382 L538,393.7 L531,400.8 L526.4,410 L524,419.5 L517,431 L507,439 L500,450" fill="none" stroke="#182b3b" stroke-width="5" stroke-linejoin="round" stroke-linecap="round"/>
<path d="M551,322 L547.5,327 L540,342 L531,360" fill="none" stroke="#182b3b" stroke-width="7.5" stroke-linejoin="round" stroke-linecap="round"/>
<path d="M531,362 L534,371 L540.5,382 L538.5,393 L532,400" fill="none" stroke="#182b3b" stroke-width="8.5" stroke-linejoin="round" stroke-linecap="round"/>
<path d="M503,441 L491,440.5 L484,431" fill="none" stroke="#1c3040" stroke-width="3" stroke-linecap="round" stroke-linejoin="round"/>
<path d="M386,426 L395,424 L399,434 L406,443 L408,458 L404,468 L394,466 L389,454 L385,440 Z" fill="#11262d"/>
<path d="M304,399 L316,401 L324,412 L330,430 L327,440 L318,437 L310,420 L303,408 Z" fill="#2f7d67"/>
<path d="M445,388 L455,386 L461,392 L456,397 L447,396 Z M470,368 L476,364 L478,369 L472,374 Z M484,394 L489,392 L490,398 L485,399 Z M594,438 L598,442 L595,446 Z" fill="#2fc2b8"/>
</g>
<g filter="url(#sb15)" fill="#2a4a34" stroke="#1c3840" stroke-width="2.4"><ellipse cx="493.7" cy="524.7" rx="5" ry="5"/><ellipse cx="501.5" cy="529.5" rx="5" ry="5"/><ellipse cx="523.4" cy="506" rx="5.5" ry="6"/><ellipse cx="531" cy="523" rx="7" ry="6"/><ellipse cx="544" cy="524.7" rx="7" ry="6"/><ellipse cx="558.5" cy="537" rx="10.5" ry="9.5"/></g>
<g fill="none" stroke="#c0a052" stroke-width=".9" opacity=".68" filter="url(#sb05)"><path d="M132,392 L160,385 L200,378 L240,372 L262,360 L300,357 L340,362 L372,352"/><path d="M150,412 L195,402 L235,400 L262,390 L280,386 L300,400 L320,410 L345,420 L380,432 L420,440 L460,445"/><path d="M275,312 L278,340 L279,370 L282,385 L300,420 L312,445"/><path d="M190,420 L230,424 L265,430 L290,445"/><path d="M372,312 L405,318 L435,331 L470,330 L510,330 L545,335 L575,345 L595,349 L610,365 L622,385 L640,400 L652,396 L660,388 L672,386 L684,378 L692,380 L702,370 L715,362" opacity=".7"/><path d="M435,331 L425,360 L418,385 L420,410 L430,430"/><path d="M622,385 L618,410 L620,430 L634,455 L660,480 L690,495 L730,505 L780,512 L828,520"/><path d="M640,400 L650,412 L625,430"/><path d="M520,440 L545,435 L575,428 L600,432 L620,431"/><path d="M776,372 L784,378 L790,386 L786,396 L785,405 L790,410 L796,413 L806,410 L815,405 L828,400" opacity=".7"/><path d="M560,470 L590,490 L620,505 L650,520 L680,535"/></g>
<text x="233" y="314.7" class="sl">İhsaniye</text>
<text x="291" y="318.9" class="sl">Çanakça</text>
<text x="237.8" y="328.2" class="sl">Kabakça</text>
<text x="273.7" y="330.2" class="sl">Subaşı</text>
<text x="270" y="344" class="sl">Gökçeali</text>
<text x="251.4" y="352.2" class="sl">İnceğiz</text>
<text x="160.5" y="365.7" class="sl">Büyükkılıçlı</text>
<text x="274.6" y="377" class="sl">Çatalca</text>
<text x="342" y="372.2" class="sl">Hadımköy</text>
<text x="174" y="396.9" class="sl">Alipaşa</text>
<text x="185.8" y="415.2" class="sl">Silivri</text>
<text x="264.8" y="427.9" class="sl">Kamiloba</text>
<text x="328" y="443.2" class="sl">Büyükçekmece</text>
<text x="341" y="411" class="sl">Akkent</text>
<text x="393" y="351.7" class="sl">Arnavutköy</text>
<text x="392" y="387.2" class="sl">Şamlar</text>
<text x="420" y="409.7" class="sl">Başakşehir</text>
<text x="385" y="467.7" class="sl">Avcılar</text>
<text x="519.4" y="317.2" class="sl">Kumköy</text>
<text x="516" y="344.7" class="sl">Zekeriyaköy</text>
<text x="456" y="352.2" class="sl">Göktürk</text>
<text x="456" y="359.2" class="sl">Merkez</text>
<text x="500" y="352.7" class="sl">Bahçeköy</text>
<text x="500" y="359.7" class="sl">Merkez</text>
<text x="541" y="354.2" class="sl">Anadolu</text>
<text x="541" y="361.7" class="sl">Kavağı</text>
<text x="596" y="331.2" class="sl">Riva</text>
<text x="678" y="343" class="sl">Sahilköy</text>
<text x="696.6" y="354" class="sl">Alacalı</text>
<text x="762" y="358.2" class="sl">Şile</text>
<text x="776.8" y="371.6" class="sl">Çayırbaşı</text>
<text x="806.8" y="377" class="sl">Akçakese</text>
<text x="615.8" y="383.2" class="sl">Cumhuriyet</text>
<text x="643.4" y="412.6" class="sl">Ömerli</text>
<text x="782" y="468.7" class="sl">Değirmençayırı</text>
<text x="786.4" y="483.2" class="sl">Kargalı</text>
<text x="622" y="432.2" class="sl">Esentepe</text>
<text x="601.7" y="460.2" class="sl">Samandıra</text>
<text x="614.6" y="474.7" class="sl">Sultanbeyli</text>
<text x="697.3" y="474" class="sl">Göçbeyli</text>
<text x="612.3" y="524.6" class="sl">Pendik</text>
<text x="620.5" y="536.2" class="sl">Güzelyalı</text>
<text x="667.3" y="534.2" class="sl">Şekerpınar</text>
<text x="763.9" y="529.7" class="sl">Tepecik</text>
<text x="558" y="526.7" class="sl">Adalar</text>
<text x="529.5" y="469.2" class="sl">Göztepe</text>
<text x="515" y="393.2" class="sl">Beykoz</text>
<text x="821" y="518" class="sl">Denizli</text>
<text x="592.5" y="393.5" class="sl2">Polonezköy</text>
<text x="592.5" y="404" class="sl2">Tabiat Parkı</text>
<text x="494.8" y="454.8" class="sl3">İstanbul</text>
<rect x="300.9" y="324.5" width="13" height="6.4" rx="1.6" fill="#5c9ee0" opacity=".92" filter="url(#sb05)"/>
<text x="307.4" y="329.2" class="sht">D020</text>
<rect x="288.3" y="390.5" width="13" height="6.4" rx="1.6" fill="#5c9ee0" opacity=".92" filter="url(#sb05)"/>
<text x="294.8" y="395.2" class="sht">D020</text>
<rect x="221.9" y="418.2" width="13" height="6.4" rx="1.6" fill="#5c9ee0" opacity=".92" filter="url(#sb05)"/>
<text x="228.4" y="422.9" class="sht">D020</text>
<rect x="277.7" y="440.7" width="13" height="6.4" rx="1.6" fill="#5c9ee0" opacity=".92" filter="url(#sb05)"/>
<text x="284.2" y="445.4" class="sht">D020</text>
<rect x="148.1" y="409.8" width="13" height="6.4" rx="1.6" fill="#5c9ee0" opacity=".92" filter="url(#sb05)"/>
<text x="154.6" y="414.5" class="sht">D020</text>
<rect x="454.5" y="362.8" width="13" height="6.4" rx="1.6" fill="#5c9ee0" opacity=".92" filter="url(#sb05)"/>
<text x="461" y="367.5" class="sht">D020</text>
<rect x="570" y="498.8" width="13" height="6.4" rx="1.6" fill="#5c9ee0" opacity=".92" filter="url(#sb05)"/>
<text x="576.5" y="503.5" class="sht">D020</text>
<rect x="522" y="452.8" width="13" height="6.4" rx="1.6" fill="#5c9ee0" opacity=".92" filter="url(#sb05)"/>
<text x="528.5" y="457.5" class="sht">D020</text>
<rect x="545" y="475.3" width="13" height="6.4" rx="1.6" fill="#5c9ee0" opacity=".92" filter="url(#sb05)"/>
<text x="551.5" y="480" class="sht">D020</text>
<rect x="709.3" y="358.2" width="13" height="6.4" rx="1.6" fill="#5c9ee0" opacity=".92" filter="url(#sb05)"/>
<text x="715.8" y="362.9" class="sht">D020</text>
<rect x="789.7" y="409.8" width="13" height="6.4" rx="1.6" fill="#5c9ee0" opacity=".92" filter="url(#sb05)"/>
<text x="796.2" y="414.5" class="sht">D020</text>
<rect x="307" y="354.7" width="13" height="6.4" rx="1.6" fill="#e86f78" opacity=".92" filter="url(#sb05)"/>
<text x="313.5" y="359.4" class="sht">O-7</text>
<rect x="176.2" y="376" width="13" height="6.4" rx="1.6" fill="#e86f78" opacity=".92" filter="url(#sb05)"/>
<text x="182.7" y="380.7" class="sht">O-7</text>
<rect x="428.5" y="329.3" width="13" height="6.4" rx="1.6" fill="#e86f78" opacity=".92" filter="url(#sb05)"/>
<text x="435" y="334" class="sht">O-7</text>
<rect x="417.5" y="362.3" width="13" height="6.4" rx="1.6" fill="#e86f78" opacity=".92" filter="url(#sb05)"/>
<text x="424" y="367" class="sht">O-7</text>
<rect x="441.5" y="422.8" width="13" height="6.4" rx="1.6" fill="#e86f78" opacity=".92" filter="url(#sb05)"/>
<text x="448" y="427.5" class="sht">O-7</text>
<rect x="416.5" y="430.8" width="13" height="6.4" rx="1.6" fill="#e86f78" opacity=".92" filter="url(#sb05)"/>
<text x="423" y="435.5" class="sht">O-7</text>
<rect x="587" y="345.3" width="13" height="6.4" rx="1.6" fill="#e86f78" opacity=".92" filter="url(#sb05)"/>
<text x="593.5" y="350" class="sht">O-7</text>
<rect x="566.5" y="422.8" width="13" height="6.4" rx="1.6" fill="#e86f78" opacity=".92" filter="url(#sb05)"/>
<text x="573" y="427.5" class="sht">O-7</text>
<rect x="628" y="452.6" width="13" height="6.4" rx="1.6" fill="#e86f78" opacity=".92" filter="url(#sb05)"/>
<text x="634.5" y="457.3" class="sht">O-7</text>
<rect x="683.8" y="492" width="13" height="6.4" rx="1.6" fill="#e86f78" opacity=".92" filter="url(#sb05)"/>
<text x="690.3" y="496.7" class="sht">O-7</text>
<rect x="817.5" y="522.8" width="13" height="6.4" rx="1.6" fill="#e86f78" opacity=".92" filter="url(#sb05)"/>
<text x="824" y="527.5" class="sht">O-7</text>
<rect x="325" y="393.6" width="13" height="6.4" rx="1.6" fill="#79c24a" opacity=".92" filter="url(#sb05)"/>
<text x="331.5" y="398.3" class="sht">E80</text>
<rect x="134" y="370.6" width="13" height="6.4" rx="1.6" fill="#79c24a" opacity=".92" filter="url(#sb05)"/>
<text x="140.5" y="375.3" class="sht">E80</text>
<rect x="409.5" y="415.8" width="13" height="6.4" rx="1.6" fill="#79c24a" opacity=".92" filter="url(#sb05)"/>
<text x="416" y="420.5" class="sht">E80</text>
<rect x="478.5" y="397.3" width="13" height="6.4" rx="1.6" fill="#79c24a" opacity=".92" filter="url(#sb05)"/>
<text x="485" y="402" class="sht">E80</text>
<rect x="439.5" y="455.8" width="13" height="6.4" rx="1.6" fill="#79c24a" opacity=".92" filter="url(#sb05)"/>
<text x="446" y="460.5" class="sht">E80</text>
<rect x="403.5" y="459.8" width="13" height="6.4" rx="1.6" fill="#79c24a" opacity=".92" filter="url(#sb05)"/>
<text x="410" y="464.5" class="sht">E80</text>
<rect x="549" y="429.8" width="13" height="6.4" rx="1.6" fill="#79c24a" opacity=".92" filter="url(#sb05)"/>
<text x="555.5" y="434.5" class="sht">E80</text>
<rect x="651.9" y="506" width="13" height="6.4" rx="1.6" fill="#79c24a" opacity=".92" filter="url(#sb05)"/>
<text x="658.4" y="510.7" class="sht">E80</text>
<use href="#pin" x="195.2" y="401.3" filter="url(#sb03)"/>
<use href="#pin" x="234.3" y="409.5" filter="url(#sb03)"/>
<use href="#pin" x="348.4" y="413" filter="url(#sb03)"/>
<use href="#pin" x="361.3" y="435" filter="url(#sb03)"/>
<use href="#pin" x="342.6" y="444" filter="url(#sb03)"/>
<use href="#pin" x="355.7" y="452.2" filter="url(#sb03)"/>
<use href="#pin" x="379.9" y="337.3" filter="url(#sb03)"/>
<use href="#pin" x="453" y="340.4" filter="url(#sb03)"/>
<use href="#pin" x="472.5" y="353.7" filter="url(#sb03)"/>
<use href="#pin" x="414.6" y="361.5" filter="url(#sb03)"/>
<use href="#pin" x="434.3" y="365.4" filter="url(#sb03)"/>
<use href="#pin" x="464.8" y="378.3" filter="url(#sb03)"/>
<use href="#pin" x="484.9" y="381.1" filter="url(#sb03)"/>
<use href="#pin" x="503.2" y="390" filter="url(#sb03)"/>
<use href="#pin" x="505.3" y="394.3" filter="url(#sb03)"/>
<use href="#pin" x="525.9" y="385.4" filter="url(#sb03)"/>
<use href="#pin" x="476.5" y="395.2" filter="url(#sb03)"/>
<use href="#pin" x="453.7" y="403" filter="url(#sb03)"/>
<use href="#pin" x="465.5" y="402.2" filter="url(#sb03)"/>
<use href="#pin" x="466.6" y="408.3" filter="url(#sb03)"/>
<use href="#pin" x="446" y="414" filter="url(#sb03)"/>
<use href="#pin" x="450.2" y="417.5" filter="url(#sb03)"/>
<use href="#pin" x="465.9" y="416.3" filter="url(#sb03)"/>
<use href="#pin" x="470.1" y="420.5" filter="url(#sb03)"/>
<use href="#pin" x="477.9" y="417.5" filter="url(#sb03)"/>
<use href="#pin" x="487.7" y="419.8" filter="url(#sb03)"/>
<use href="#pin" x="494.3" y="421" filter="url(#sb03)"/>
<use href="#pin" x="474.1" y="429.9" filter="url(#sb03)"/>
<use href="#pin" x="476" y="439.3" filter="url(#sb03)"/>
<use href="#pin" x="464.8" y="443.3" filter="url(#sb03)"/>
<use href="#pin" x="432.2" y="442.8" filter="url(#sb03)"/>
<use href="#pin" x="416.5" y="451.7" filter="url(#sb03)"/>
<use href="#pin" x="385.1" y="405.8" filter="url(#sb03)"/>
<use href="#pin" x="379.9" y="422.4" filter="url(#sb03)"/>
<use href="#pin" x="374.8" y="427.6" filter="url(#sb03)"/>
<use href="#pin" x="361.9" y="435.1" filter="url(#sb03)"/>
<use href="#pin" x="521.7" y="419.4" filter="url(#sb03)"/>
<use href="#pin" x="533" y="430.6" filter="url(#sb03)"/>
<use href="#pin" x="542.1" y="423.3" filter="url(#sb03)"/>
<use href="#pin" x="547.5" y="416.3" filter="url(#sb03)"/>
<use href="#pin" x="554" y="456.9" filter="url(#sb03)"/>
<use href="#pin" x="578" y="439.7" filter="url(#sb03)"/>
<use href="#pin" x="589" y="432.2" filter="url(#sb03)"/>
<use href="#pin" x="595" y="312.7" filter="url(#sb03)"/>
<use href="#pin" x="763.4" y="344.8" filter="url(#sb03)"/>
<use href="#pin" x="608.7" y="432.2" filter="url(#sb03)"/>
<use href="#pin" x="620.5" y="460.4" filter="url(#sb03)"/>
<use href="#pin" x="629.4" y="518.2" filter="url(#sb03)"/>
<use href="#pin" x="641.6" y="517.2" filter="url(#sb03)"/>
<use href="#pin" x="572.8" y="483.5" filter="url(#sb03)"/>
<use href="#pin" x="582.8" y="503.8" filter="url(#sb03)"/>
</svg>
<svg id="ovl" width="696" height="246.2" viewBox="132 304 696 246.2">
<rect x="141.5" y="310" width="14.4" height="14.4" rx="3.2" fill="#fff" stroke="#d8dde5" stroke-width=".5"/>
<rect x="158.5" y="310" width="14.4" height="14.4" rx="3.2" fill="#fff" stroke="#d8dde5" stroke-width=".5"/>
<rect x="175.5" y="310" width="14.4" height="14.4" rx="3.2" fill="#fff" stroke="#d8dde5" stroke-width=".5"/>
<path d="M144.2,318 L148.7,313.2 L153.2,318 M145.5,317 V321.8 H151.9 V317 M147.4,321.8 v-2.6 q1.3,-1.6 2.6,0 v2.6" fill="none" stroke="#9aa1ab" stroke-width=".75"/>
<circle cx="165.7" cy="317" r="3.6" fill="#111"/><path d="M164,320 l-1.2,1.8 l2.6,-1.2" fill="#111"/><rect x="165.3" y="315" width=".9" height="3.6" fill="#fff"/>
<path d="M179.6,313.2 h4.6 l2,2 v2.2 l1.2,1.4 l-1.2,.6 v2.4 h-6.6 Z" fill="#5a5d60"/><path d="M180.8,315.2 h3.6 M180.8,316.8 h3.6" stroke="#fff" stroke-width=".6"/><path d="M181.3,318.4 v3.4 M183,318.4 v3.4 M184.7,318.4 v3.4" stroke="#fff" stroke-width=".7"/>
<g transform="translate(144,382)"><rect x="-6.6" y="-6.6" width="13.2" height="13.2" rx="5" fill="#0d2452" stroke="#2a4172" stroke-width=".9"/><path d="M0,3.6 C-.8,1.8 -2.5,.4 -2.5,-1.3 A2.5,2.5 0 0 1 2.5,-1.3 C2.5,.4 .8,1.8 0,3.6 Z" fill="#fff"/><circle cy="-1.3" r="1" fill="#0d2452"/></g>
<g transform="translate(144,397.4)"><rect x="-6.6" y="-6.6" width="13.2" height="13.2" rx="5" fill="#0d2452" stroke="#2a4172" stroke-width=".9"/><path d="M0,-3.6 L-4,0 h1.2 v3.2 h2 v-2.2 h1.6 v2.2 h2 v-3.2 H4 Z" fill="#fff"/></g>
<g transform="translate(144,413.2)"><rect x="-6.6" y="-6.6" width="13.2" height="13.2" rx="5" fill="#0d2452" stroke="#2a4172" stroke-width=".9"/><path d="M-2.2,3.8 L-3.8,.6 Q-3.9,-.2 -3,.1 L-2.3,1 V-2.6 Q-1.8,-3.3 -1.3,-2.6 V-.4 V-3.3 Q-.8,-4 -.3,-3.3 V-.4 V-3 Q.2,-3.7 .7,-3 V-.2 V-2.2 Q1.2,-2.9 1.7,-2.2 V1.8 L1.2,3.8 Z" fill="#fff" transform="translate(.9,0)"/></g>
<g transform="translate(144,428.9)"><rect x="-6.6" y="-6.6" width="13.2" height="13.2" rx="5" fill="#0d2452" stroke="#2a4172" stroke-width=".9"/><path d="M-3.6,0 H3.6 M0,-3.6 V3.6" stroke="#fff" stroke-width="1.7" fill="none"/></g>
<g transform="translate(144,444.6)"><rect x="-6.6" y="-6.6" width="13.2" height="13.2" rx="5" fill="#0d2452" stroke="#2a4172" stroke-width=".9"/><path d="M-3.6,0 H3.6" stroke="#fff" stroke-width="1.7" fill="none"/></g>
<g transform="translate(144,460.5)"><rect x="-6.6" y="-6.6" width="13.2" height="13.2" rx="5" fill="#0d2452" stroke="#2a4172" stroke-width=".9"/><path d="M-2.6,-1.8 h5.2 l-.5,5.4 h-4.2 Z M-3.2,-2.8 h6.4 v.8 h-6.4 Z M-1,-3.6 h2 v.8 h-2 Z" fill="#dfe4ee"/></g>
<g transform="translate(144,475.8)"><rect x="-6.6" y="-6.6" width="13.2" height="13.2" rx="5" fill="#0d2452" stroke="#2a4172" stroke-width=".9"/><path d="M-3.2,-3.2 L3.2,3.2 M3.2,-3.2 L-3.2,3.2" stroke="#fff" stroke-width="1.6" fill="none"/></g>
<g transform="translate(144,540.6)"><rect x="-6.6" y="-6.6" width="13.2" height="13.2" rx="5" fill="#0d2452" stroke="#2a4172" stroke-width=".9"/><ellipse cy="-2" rx="3.2" ry="1.5" fill="#fff"/><path d="M-3.2,-.8 v3 a3.2,1.5 0 0 0 6.4,0 v-3 a3.2,1.5 0 0 1 -6.4,0" fill="#fff"/><path d="M-3.2,.8 a3.2,1.5 0 0 0 6.4,0" stroke="#0d2452" stroke-width=".6" fill="none"/></g>
<g transform="translate(159.3,540.6)"><rect x="-6.6" y="-6.6" width="13.2" height="13.2" rx="5" fill="#0d2452" stroke="#2a4172" stroke-width=".9"/><path d="M-2.2,-3.4 h4.4 v2 h-4.4 Z M-3.8,-1.2 h7.6 v3.4 h-1.4 v-1.4 h-4.8 v1.4 h-1.4 Z M-2,1.4 h4 v2.2 h-4 Z" fill="#fff"/></g>
<g transform="translate(174.7,540.6)"><rect x="-6.6" y="-6.6" width="13.2" height="13.2" rx="5" fill="#0d2452" stroke="#2a4172" stroke-width=".9"/><path d="M-3.4,-3.4 L3.4,3.4 M3.4,-3.4 L-3.4,3.4" stroke="#fff" stroke-width="1.5" fill="none"/><circle cx="-3" cy="3" r="1" fill="#fff"/><circle cx="3" cy="3" r="1" fill="#fff"/></g>
<g transform="translate(191,540.6)"><rect x="-6.6" y="-6.6" width="13.2" height="13.2" rx="5" fill="#0d2452" stroke="#2a4172" stroke-width=".9"/><circle cy="-2.2" r="1.6" fill="#fff"/><path d="M-3.8,3.4 v-2 l2,-1.6 h3.6 l2,1.6 v2 Z" fill="#fff"/><path d="M-1,0 l1,1.4 l1,-1.4" fill="#0d2452"/></g>
<rect x="810" y="328.4" width="13.6" height="13.6" rx="2.6" fill="#13295a" stroke="#3b5286" stroke-width=".8"/><text x="816.8" y="337.4" class="bdg">2</text>
<path d="M463,550.2 V546.2 a2,2 0 0 1 2,-2 H494 a2,2 0 0 1 2,2 V550.2 Z" fill="#0c2755"/><path d="M477.2,546 h5 l-2.5,2.6 Z" fill="#fff"/>
<rect x="637" y="539" width="186.3" height="11.2" fill="#0f1f45" opacity=".93"/>
<text x="640" y="546.6" class="stt">WEB MERCATOR   X : 3277536.849271   Y : 3824604.295482  Ölçek: 1/325345</text>
</svg>
<div id="tabs"><span class="tb" style="left:6.5px">Taşınmaz Listesi &nbsp;×</span><span class="tb" style="left:61.5px">Taşınmaz Listesi &nbsp;×</span><span class="tb act" style="left:109.3px">Taşınmaz Listesi &nbsp;×</span></div>
<div id="tbl">
<svg width="0" height="0" style="position:absolute"><defs><g id="rowic" fill="none" stroke="#72787f" stroke-width=".75"><path d="M146.6,-1.6 h4.8 v3.4 h-4.8 Z M146.6,-1.4 l2.4,1.8 l2.4,-1.8"/><path d="M158.8,1.8 v-3.6 M160.4,1.8 v-2.4 M161.4,-1.6 v.5 M162.6,1.8 v-2.2 h1.4 v2.2" stroke-width=".9"/><path d="M173,2 c-.5,-1.2 -1.4,-1.8 -1.4,-2.8 a1.4,1.4 0 0 1 2.8,0 c0,1 -.9,1.6 -1.4,2.8 Z" fill="#72787f" stroke="none"/><path d="M185.4,-1.6 h-2.4 v3.6 h3.8 v-2.2 M184.6,.6 l3,-3"/><path d="M196,-1 h3.6 M196.6,-1 l.3,3 h1.8 l.3,-3 M197.2,-1.8 h1.2" stroke-width=".8"/></g></defs></svg>
<div class="ttb"><span style="left:4.5px">+</span><span style="left:12.5px">Yeni Ekle</span><i class="gx"></i><span style="left:56px">▭</span><span style="left:70px">↑</span></div>
<div class="srch"><span>Ara</span><b>⌕</b></div>
<div class="thr">
<span style="left:73.5px">İl</span>
<span style="left:139px">İlçe</span>
<span style="left:204px">Mahalle</span>
<span style="left:269px">Ada</span>
<span style="left:302.5px">Parsel</span>
<span style="left:335.5px">Taşınmaz Adı</span>
<span style="left:430.5px">Sorumlu Birim</span>
<span style="left:534px">Bina Adet</span>
<span style="left:586.5px">Lojman Adet</span>
<span style="left:638.5px">Devam Eden İş</span>
</div>
<div class="tr" style="top:33.2px">
<svg class="ri" width="60" height="8" viewBox="145 -4 60 8"><use href="#rowic"/></svg>
<span style="left:74px">İSTANBUL</span>
<span style="left:139px">ARNAVUTKÖY</span>
<span style="left:204px">HARAÇÇI</span>
<span style="left:269px">5104</span>
<span style="left:302.5px">2</span>
<span class="z" style="left:534.5px">0</span>
<span class="z" style="left:587px">0</span>
<span class="z" style="left:639px">0</span>
</div>
<div class="tr alt" style="top:50.57px">
<svg class="ri" width="60" height="8" viewBox="145 -4 60 8"><use href="#rowic"/></svg>
<span style="left:74px">İSTANBUL</span>
<span style="left:139px">ATAŞEHİR</span>
<span style="left:204px">İÇERENKÖY</span>
<span style="left:269px">913</span>
<span style="left:302.5px">267</span>
<span class="z" style="left:534.5px">0</span>
<span class="z" style="left:587px">0</span>
<span class="z" style="left:639px">0</span>
</div>
<div class="tr" style="top:67.94px">
<svg class="ri" width="60" height="8" viewBox="145 -4 60 8"><use href="#rowic"/></svg>
<span style="left:74px">İSTANBUL</span>
<span style="left:139px">AVCILAR</span>
<span style="left:204px">FİRUZKÖY</span>
<span style="left:269px">-</span>
<span style="left:302.5px">158</span>
<span class="z" style="left:534.5px">0</span>
<span class="z" style="left:587px">0</span>
<span class="z" style="left:639px">0</span>
</div>
<div class="tr alt" style="top:85.31px">
<svg class="ri" width="60" height="8" viewBox="145 -4 60 8"><use href="#rowic"/></svg>
<span style="left:74px">İSTANBUL</span>
<span style="left:139px">AVCILAR</span>
<span style="left:204px">FİRUZKÖY</span>
<span style="left:269px">649</span>
<span style="left:302.5px">3</span>
<span class="z" style="left:534.5px">0</span>
<span class="z" style="left:587px">0</span>
<span class="z" style="left:639px">0</span>
</div>
<div class="tr" style="top:102.68px">
<svg class="ri" width="60" height="8" viewBox="145 -4 60 8"><use href="#rowic"/></svg>
<span style="left:74px">İSTANBUL</span>
<span style="left:139px">BAHÇELİEVLER</span>
<span style="left:204px">YENİBOSNA</span>
<span style="left:269px">130</span>
<span style="left:302.5px">9</span>
<span class="z" style="left:534.5px">0</span>
<span class="z" style="left:587px">0</span>
<span class="z" style="left:639px">0</span>
</div>
<div class="tr alt" style="top:120.05px">
<svg class="ri" width="60" height="8" viewBox="145 -4 60 8"><use href="#rowic"/></svg>
<span style="left:74px">İSTANBUL</span>
<span style="left:139px">BAKIRKÖY</span>
<span style="left:204px">ŞENLİK</span>
<span style="left:269px">718</span>
<span style="left:302.5px">1</span>
<span class="z" style="left:534.5px">0</span>
<span class="z" style="left:587px">0</span>
<span class="z" style="left:639px">0</span>
</div>
<div class="tr" style="top:137.42px">
<svg class="ri" width="60" height="8" viewBox="145 -4 60 8"><use href="#rowic"/></svg>
<span style="left:74px">İSTANBUL</span>
<span style="left:139px">BAŞAKŞEHİR</span>
<span style="left:204px">KAYABAŞI</span>
<span style="left:269px">963</span>
<span style="left:302.5px">14</span>
<span class="z" style="left:534.5px">0</span>
<span class="z" style="left:587px">0</span>
<span class="z" style="left:639px">0</span>
</div>
<div class="lbar"></div><div class="sbar"></div><div class="sthumb"></div>
<div class="tft"><span>Toplam: 55</span><span>Gösterilen: 55</span><span>Seçilen: 0</span></div>
</div>
<div id="pnl">
<svg class="notch" width="12" height="22" viewBox="0 0 12 22"><path d="M12,0 H7 L2.4,6.6 Q1.4,8 2.6,9.4 L9.6,16.5 Q12,19 12,21.5 Z" fill="#fff"/></svg>
<div class="pt">Taşınmaz İşlemleri</div>
<div class="pc"><span>?</span><span>–</span><span>×</span></div>
<svg class="ptb" width="120" height="12" viewBox="896 332 120 12">
<rect x="896.8" y="332.5" width="11.6" height="11" rx="1.2" fill="#0d2452"/>
<rect x="909.8" y="332.5" width="11.6" height="11" rx="1.2" fill="#0d2452"/>
<rect x="922.9" y="332.5" width="11.6" height="11" rx="1.2" fill="#0d2452"/>
<rect x="936" y="332.5" width="11.6" height="11" rx="1.2" fill="#0d2452"/>
<rect x="949.2" y="332.5" width="11.6" height="11" rx="1.2" fill="#5a6d92"/>
<rect x="962.2" y="332.5" width="11.6" height="11" rx="1.2" fill="#0d2452"/>
<path d="M902.6,341.4 c-.6,-1.4 -2,-2.4 -2,-3.8 a2,2 0 0 1 4,0 c0,1.4 -1.4,2.4 -2,3.8 Z" fill="#fff"/><circle cx="902.6" cy="337.6" r=".8" fill="#0d2452"/>
<rect x="913" y="335.4" width="5.2" height="5.2" rx="1.2" fill="none" stroke="#fff" stroke-width=".9"/>
<path d="M926,338.6 l2,-1.4 l1.6,1 l2,-1.6" fill="none" stroke="#c8d0e0" stroke-width=".8"/>
<path d="M940.4,334.6 l4,3.6 l-1.8,.2 l1,2.2 l-1,.5 l-1,-2.2 l-1.2,1.2 Z" fill="#fff"/>
<path d="M952.4,335.6 h3 M952.4,335.6 v5.4 h5.2 v-3" fill="none" stroke="#fff" stroke-width=".9"/><path d="M954.4,339 l.4,-1.6 l3,-3 l1.2,1.2 l-3,3 Z" fill="#fff"/>
<path d="M965.8,336.2 h4.4 l-.4,5 h-3.6 Z M965.2,335 h5.6 v.8 h-5.6 Z M967,334.2 h2 v.8 h-2 Z" fill="#fff"/>
<rect x="975.8" y="332.5" width="38.4" height="11" rx="1.2" fill="#0d2452"/>
<path d="M979,338 h4.2 M981.1,335.9 v4.2" stroke="#fff" stroke-width="1.2"/>
<text x="986.2" y="340" class="pbt">Yeni Ekle</text>
</svg>
<div class="fl" style="top:42.4px">İl</div>
<div class="fi sel" style="top:40.4px"><span>İSTANBUL</span></div>
<div class="fl" style="top:56.72px">İlçe</div>
<div class="fi sel" style="top:54.72px"><span></span></div>
<div class="fl" style="top:71.04px">Mahalle</div>
<div class="fi sel" style="top:69.04px"><span></span></div>
<div class="fl" style="top:85.36px">Ada</div>
<div class="fi" style="top:83.36px"><span></span></div>
<div class="fl" style="top:99.68px">Parsel</div>
<div class="fi" style="top:97.68px"><span></span></div>
<div class="fl" style="top:114px">Yatırım Tipi</div>
<div class="fi sel" style="top:112px"><span></span></div>
<div class="fl" style="top:128.32px">Yatırım Sektör</div>
<div class="fi sel" style="top:126.32px"><span></span></div>
<div class="fl" style="top:142.64px">Yatırım Türü</div>
<div class="fi sel" style="top:140.64px"><span></span></div>
<div class="fl" style="top:156.96px">Yatırım Aşama</div>
<div class="fi sel" style="top:154.96px"><span></span></div>
<div class="fl" style="top:171.28px">Durum</div>
<div class="fi sel" style="top:169.28px"><span></span></div>
<div class="sorg">Sorgula</div>
</div>
</div>
</body></html>
